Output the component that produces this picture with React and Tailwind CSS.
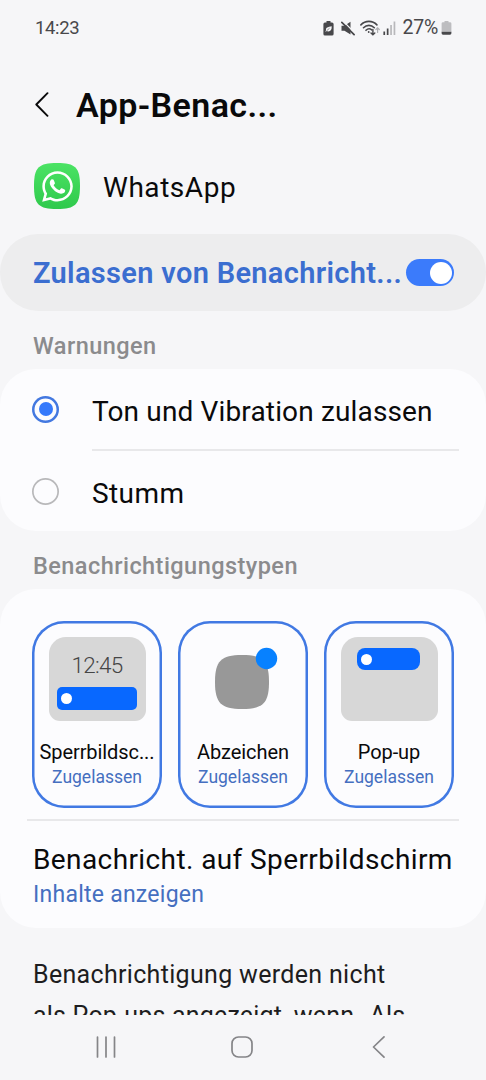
import { useState } from 'react';
import { FaWhatsapp } from 'react-icons/fa';

const types = [
  { id: 'lock', label: 'Sperrbildsc...', preview: <LockPreview /> },
  { id: 'badge', label: 'Abzeichen', preview: <BadgePreview /> },
  { id: 'popup', label: 'Pop-up', preview: <PopupPreview /> },
];

function StatusBar() {
  return (
    <div className="flex h-14 shrink-0 items-center justify-between pl-[35px] pr-[34px] text-[#48484b]">
      <span className="text-[18.500px] leading-none tracking-[-0.350px]">14:23</span>
      <div className="flex items-center">
        {/* power saving battery */}
        <svg className="h-[15px] w-[11px]" viewBox="0 0 11 15">
          <path d="M3.500 0h4v1.500H9A1.600 1.600 0 0 1 10.600 3v10A1.600 1.600 0 0 1 9 14.600H2A1.600 1.600 0 0 1 .4 13V3A1.600 1.600 0 0 1 2 1.500h1.500z" fill="currentColor" />
          <path d="M8.700 5.200c.2 3.200-1 5.300-3.400 5.200-.7 0-1.200-.2-1.600-.5l-.8.9-.6-.5.9-1C2.200 6.600 5 6 8.700 5.200z" fill="#f6f6f8" />
          <path d="M3.700 9.700 6.500 7.300" stroke="currentColor" strokeWidth=".6" />
        </svg>
        {/* muted speaker */}
        <svg className="ml-[7px] h-[15px] w-[14px]" viewBox="0 0 14 15">
          <path d="M.5 4.700h3L9.500.8v12.600L3.500 9.800h-3z" fill="currentColor" />
          <path d="M1.800-.2 14.200 12.400" stroke="#f6f6f8" strokeWidth="1.300" />
          <path d="M.8 1.300l12.300 12.400" stroke="currentColor" strokeWidth="1.700" strokeLinecap="round" />
        </svg>
        {/* wifi with traffic arrows */}
        <svg className="ml-[5px] h-[16px] w-[20px]" viewBox="0 0 20 16" fill="none" stroke="currentColor" strokeWidth="1.600" strokeLinecap="round">
          <path d="M.9 4.900C5.400.2 12.400.2 16.900 4.900M3.500 7.700c3.100-3.100 7.700-3.100 10.800 0M6 10.300c1.600-1.600 4-1.800 5.700-.5" />
          <circle cx="8.700" cy="12" r=".9" fill="currentColor" stroke="none" />
          <path d="M12.900 9.500v5M11 12.900l1.900 1.900 1.900-1.900" strokeWidth="1.400" />
          <path d="M17.600 12.500V8M15.900 9.500l1.700-1.700 1.700 1.700" stroke="#b0b0b3" strokeWidth="1.200" />
        </svg>
        {/* mobile signal */}
        <svg className="ml-[3px] h-[14px] w-[13px]" viewBox="0 0 13 14">
          <path d="M.4 10.500h1.700V14H.4zM3.800 7.500h1.700V14H3.800z" fill="currentColor" />
          <path d="M7.200 4h1.700v10H7.200zM10.600.6h1.700V14h-1.700z" fill="#b8b8bb" />
        </svg>
        <span className="ml-[6px] text-[19.500px] leading-none tracking-[-0.2px]">27%</span>
        <svg className="ml-[3px] h-[14px] w-[11px]" viewBox="0 0 11 14">
          <path d="M3.500 0h4v1.200H9A1.400 1.400 0 0 1 10.400 2.600V10.800H.6V2.600A1.400 1.400 0 0 1 2 1.200h1.500z" fill="#bdbdc0" />
          <path d="M.6 10.800h9.800v1.500A1.400 1.400 0 0 1 9 13.700H2A1.400 1.400 0 0 1 .6 12.300z" fill="currentColor" />
        </svg>
      </div>
    </div>
  );
}

function LockPreview() {
  return (
    <div className="flex h-[84px] w-[97px] flex-col items-center rounded-t-[17px] rounded-b-[11px] bg-[#d7d7d7]">
      <span className="mt-[16px] text-[22.500px] leading-6 font-light tracking-[-0.7px] text-[#454545]">12:45</span>
      <div className="mt-[10px] flex h-[23px] w-[80px] items-center rounded-[5px] bg-[#0868ff] pl-[4px]">
        <span className="h-[11px] w-[11px] rounded-full bg-white" />
      </div>
    </div>
  );
}

function BadgePreview() {
  return (
    <div className="flex h-[84px] items-start justify-center pt-[7px]">
      <svg className="ml-[5px] h-[66px] w-[64px]" viewBox="0 0 64 66">
        <path d="M1 38C1 17 7 11 28 11S55 17 55 38 49 65 28 65 1 59 1 38z" fill="#989898" />
        <circle cx="52.500" cy="14.500" r="10.700" fill="#0781ff" />
      </svg>
    </div>
  );
}

function PopupPreview() {
  return (
    <div className="flex h-[84px] w-[97px] flex-col items-center rounded-t-[17px] rounded-b-[11px] bg-[#d7d7d7] pt-[11px]">
      <div className="mr-[1px] flex h-[22px] w-[63px] items-center rounded-[8px] bg-[#0868ff] pl-[4px]">
        <span className="h-[11px] w-[11px] rounded-full bg-white" />
      </div>
    </div>
  );
}

function Radio({ checked }) {
  return checked ? (
    <span className="mb-[2px] flex h-[27px] w-[27px] items-center justify-center rounded-full shadow-[inset_0_0_0_2.500px_#4378e0]">
      <span className="h-[14px] w-[14px] rounded-full bg-[#3579fb]" />
    </span>
  ) : (
    <span className="h-[27px] w-[27px] rounded-full shadow-[inset_0_0_0_1.700px_#b8b8ba]" />
  );
}

export default function App() {
  const [allowed, setAllowed] = useState(true);
  const [alert, setAlert] = useState('sound');

  return (
    <div className="flex h-[1080px] w-[486px] flex-col overflow-hidden bg-[#f6f6f8] font-['Roboto',sans-serif] whitespace-nowrap text-[#0a0a0b]">
      <StatusBar />

      <header className="flex h-[98px] shrink-0 items-center pl-[35px]">
        <svg className="h-[26px] w-[15px]" viewBox="0 0 15 26" fill="none" stroke="currentColor" strokeWidth="1.900" strokeLinecap="round" strokeLinejoin="round">
          <path d="M12.500 1.200 1.300 12.500l11.200 11.300" />
        </svg>
        <h1 className="ml-[26px] text-[34px] leading-10 font-semibold tracking-[0.4px]">App-Benac...</h1>
      </header>

      <div className="flex h-[80px] shrink-0 items-start pt-[9px] pl-[34px]">
        <div className="grid h-[46px] w-[46px] place-items-center">
          <svg className="col-start-1 row-start-1 h-[46px] w-[46px]" viewBox="0 0 46 46">
            <defs>
              <linearGradient id="wa" x1="0" y1="0" x2="0" y2="1">
                <stop offset="0" stopColor="#4be364" />
                <stop offset="1" stopColor="#2fc94c" />
              </linearGradient>
            </defs>
            <path d="M0 23C0 4.500 4.500 0 23 0s23 4.500 23 23-4.500 23-23 23S0 41.500 0 23z" fill="url(#wa)" />
          </svg>
          <FaWhatsapp className="z-10 col-start-1 row-start-1 h-[35px] w-[35px] text-white" />
        </div>
        <span className="ml-[23px] pt-[5px] text-[28px] leading-10 tracking-[0.550px]">WhatsApp</span>
      </div>

      <div className="flex h-[77px] shrink-0 items-center justify-between rounded-[38px] bg-[#ededee] pr-[32px] pl-[33px]">
        <span className="pt-[3px] text-[29px] font-semibold tracking-[0.320px] text-[#3b6ed0]">Zulassen von Benachricht...</span>
        <button
          type="button"
          onClick={() => setAllowed(!allowed)}
          className={`flex h-[27px] w-[48px] shrink-0 items-center rounded-full p-[2.500px] ${allowed ? 'justify-end bg-[#3b7bfb]' : 'justify-start bg-[#9a9a9c]'}`}
        >
          <span className="h-[22px] w-[22px] rounded-full bg-white" />
        </button>
      </div>

      <h2 className="h-[58px] shrink-0 pl-[33px] text-[23.500px] leading-[71px] font-medium tracking-[0.450px] text-[#8b8b8d]">Warnungen</h2>

      <section className="h-[162px] shrink-0 rounded-[36px] bg-[#fcfcfe] pr-[27px] pl-[32px]">
        <button type="button" onClick={() => setAlert('sound')} className="flex h-[82px] w-full items-center text-left">
          <Radio checked={alert === 'sound'} />
          <span className="ml-[33px] flex h-full flex-1 items-center border-b-2 border-[#e8e8ea] pt-[6px] text-[28px] tracking-[0.150px]">
            Ton und Vibration zulassen
          </span>
        </button>
        <button type="button" onClick={() => setAlert('silent')} className="flex h-[81px] w-full items-center text-left">
          <Radio checked={alert === 'silent'} />
          <span className="ml-[33px] pt-[4px] text-[28px] tracking-[0.4px]">Stumm</span>
        </button>
      </section>

      <h2 className="h-[58px] shrink-0 pl-[33px] text-[23.500px] leading-[71px] font-medium tracking-[0.450px] text-[#8b8b8d]">
        Benachrichtigungstypen
      </h2>

      <section className="flex h-[339px] shrink-0 flex-col rounded-[36px] bg-[#fcfcfe] pt-[32px] pr-[27px] pl-[27px]">
        <div className="flex gap-[16px] pl-[5px]">
          {types.map((type) => (
            <div
              key={type.id}
              className="flex h-[187px] w-[130px] flex-col items-center rounded-[32px] pt-[16px] shadow-[inset_0_0_0_2.500px_#4179e3]"
            >
              {type.preview}
              <span className="mt-[19px] text-[20px] leading-6 tracking-[-0.080px]">{type.label}</span>
              <span className="mt-[3px] text-[17.500px] leading-5 text-[#456fc0]">Zugelassen</span>
            </div>
          ))}
        </div>
        <div className="mt-[11px] h-[2px] shrink-0 bg-[#e8e8ea]" />
        <div className="flex flex-col pt-[19px] pl-[6px]">
          <span className="text-[28px] leading-10 tracking-[0.4px]">Benachricht. auf Sperrbildschirm</span>
          <span className="text-[23px] leading-[30px] tracking-[0.250px] text-[#456fc0]">Inhalte anzeigen</span>
        </div>
      </section>

      <p className="h-[87px] shrink-0 overflow-hidden pt-[26px] pl-[33px] text-[25px] leading-[41px] tracking-[0.320px] text-[#1d1d20]">
        Benachrichtigung werden nicht
        <br />
        <span className="tracking-[0.200px]">als Pop-ups angezeigt, wenn „Als</span>
      </p>

      <nav className="flex h-[65px] shrink-0 items-start justify-between pt-[21px] pr-[101px] pl-[95px] text-[#858588]">
        <svg className="h-[22px] w-[22px]" viewBox="0 0 22 22" stroke="currentColor" strokeWidth="1.700" strokeLinecap="round">
          <path d="M2.500 1v20M11 1v20M19.500 1v20" />
        </svg>
        <svg className="mr-[6px] h-[22px] w-[22px]" viewBox="0 0 22 22" fill="none" stroke="currentColor" strokeWidth="1.700">
          <rect x="1" y="1" width="20" height="20" rx="6.500" />
        </svg>
        <svg className="h-[22px] w-[13px]" viewBox="0 0 13 22" fill="none" stroke="currentColor" strokeWidth="1.700" strokeLinecap="round" strokeLinejoin="round">
          <path d="M12 .9 1.500 11 12 21.100" />
        </svg>
      </nav>
    </div>
  );
}
